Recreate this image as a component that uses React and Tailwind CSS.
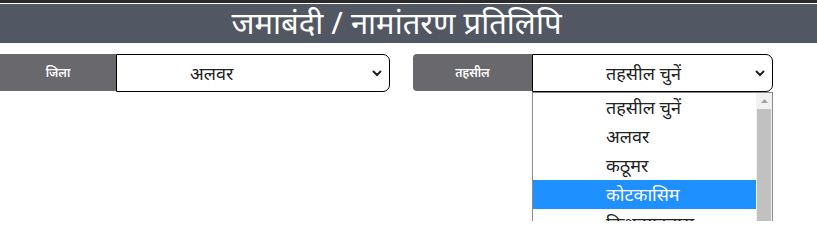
import { useState } from 'react';

const tehsils = ['तहसील चुनें', 'अलवर', 'कठूमर', 'कोटकासिम', 'किशनगढ़बास'];

function Chevron() {
  return (
    <svg width="10" height="7" viewBox="0 0 10 7" className="shrink-0">
      <path d="M1.5 1.5 L5 5 L8.5 1.5" fill="none" stroke="#222" strokeWidth="2" strokeLinecap="round" />
    </svg>
  );
}

function Field({ label, value, labelW, selectW, rounded, children }) {
  return (
    <div className="relative flex">
      <div
        className={`flex h-[37px] items-center justify-center bg-[#69686d] text-[12px] font-semibold text-white ${rounded ? 'rounded-l-[4px]' : ''}`}
        style={{ width: labelW }}
      >
        {label}
      </div>
      <div
        className="flex h-[38px] items-center justify-between rounded-r-[7px] border border-black bg-white pl-[73px] pr-[7px] text-[18px] text-[#222]"
        style={{ width: selectW }}
      >
        <span>{value}</span>
        <Chevron />
      </div>
      {children}
    </div>
  );
}

export default function App() {
  const [active] = useState(3);

  return (
    <div className="h-[221px] w-[817px] overflow-hidden bg-white font-['Noto_Sans','Liberation_Sans',sans-serif]">
      <div className="h-[3px] bg-[#2a2a2c]" />
      <div className="mt-px flex h-[39px] items-center justify-center bg-[#525863] pb-[2px] pr-[24px] text-[31px] font-normal text-white">
        जमाबंदी / नामांतरण प्रतिलिपि
      </div>

      <div className="mt-[11px] flex">
        <Field label="जिला" value="अलवर" labelW={116} selectW={274} />
        <div className="ml-[23px]">
          <Field label="तहसील" value="तहसील चुनें" labelW={119} selectW={241} rounded>
            <div className="absolute left-[119px] top-[38px] flex h-[140px] w-[241px] border border-[#8a8a8a] bg-white">
              <div className="flex-1">
                {tehsils.map((t, i) => (
                  <div
                    key={t}
                    className={`flex h-[29px] items-center pl-[73px] text-[18px] ${i === active ? 'bg-[#1e90ff] text-white' : 'text-[#222]'}`}
                  >
                    {t}
                  </div>
                ))}
              </div>
              <div className="flex w-[16px] flex-col bg-[#f1f1f1]">
                <div className="flex h-[16px] items-center justify-center">
                  <svg width="7" height="4" viewBox="0 0 7 4">
                    <path d="M0 4 L3.5 0 L7 4 Z" fill="#a3a3a3" />
                  </svg>
                </div>
                <div className="mx-[1px] flex-1 bg-[#c1c1c1]" />
              </div>
            </div>
          </Field>
        </div>
      </div>
    </div>
  );
}
